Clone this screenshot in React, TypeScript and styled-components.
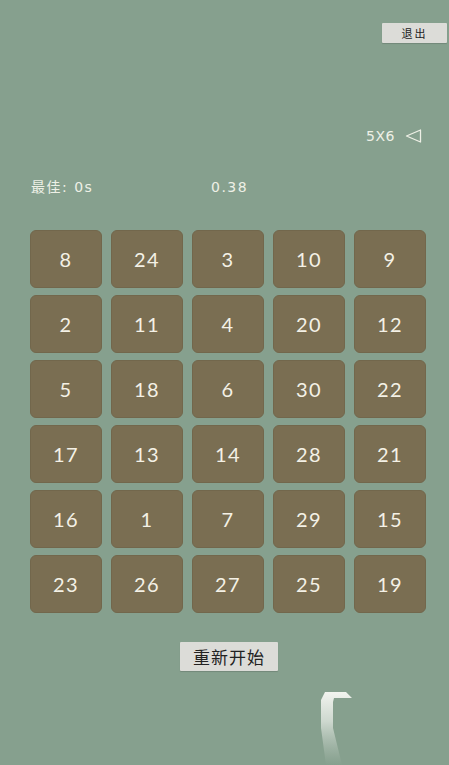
import React from "react";
import styled, { createGlobalStyle } from "styled-components";

const Global = createGlobalStyle`
  html, body { margin: 0; padding: 0; background: #86a08e; }
  #root { min-height: 765px; }
`;

const Page = styled.div`
  position: relative;
  width: 449px;
  height: 765px;
  overflow: hidden;
  background: #86a08e;
  padding-top: 23px;
  box-sizing: border-box;
  font-family: "DejaVu Sans", "Noto Sans CJK SC", sans-serif;
`;

const TopBar = styled.div`
  display: flex;
  justify-content: flex-end;
  padding-right: 2px;
`;

const ExitButton = styled.button`
  width: 65px;
  height: 20px;
  padding: 0;
  border: none;
  border-radius: 1px;
  background: #dcdcd8;
  color: #222;
  font-family: "Noto Sans CJK SC", sans-serif;
  font-size: 11px;
  line-height: 20px;
  letter-spacing: 2px;
  box-shadow: 0 1px 1px rgba(0, 0, 0, 0.15);
`;

const SizeRow = styled.div`
  margin-top: 84px;
  height: 18px;
  display: flex;
  justify-content: flex-end;
  align-items: center;
  gap: 10px;
  padding-right: 27px;
  color: #eef0e6;
  font-size: 14px;
  line-height: 18px;
  letter-spacing: 0.5px;
`;

const Triangle = styled.svg`
  width: 17px;
  height: 14px;
`;

const StatsRow = styled.div`
  margin-top: 33px;
  height: 18px;
  display: flex;
  align-items: center;
  padding-left: 31px;
  color: #eef0e6;
  font-size: 14px;
  line-height: 18px;
  letter-spacing: 1.5px;
`;

const Best = styled.span`
  width: 180px;
`;

const Grid = styled.div`
  margin-top: 34px;
  margin-left: 30px;
  display: grid;
  grid-template-columns: repeat(5, 72px);
  grid-auto-rows: 58px;
  column-gap: 9px;
  row-gap: 7px;
`;

const Tile = styled.div`
  display: flex;
  align-items: center;
  justify-content: center;
  background: #7a6e52;
  border: 1px solid #72674c;
  border-radius: 6px;
  box-sizing: border-box;
  color: #f4f1e6;
  font-family: "Lato", "Noto Sans", sans-serif;
  font-size: 20px;
  letter-spacing: 1.5px;
`;

const RestartRow = styled.div`
  margin-top: 29px;
  padding-left: 180px;
`;

const RestartButton = styled.button`
  width: 98px;
  height: 29px;
  padding: 0;
  border: none;
  border-radius: 1px;
  background: #dcdcd8;
  color: #222;
  font-family: "Noto Sans CJK SC", sans-serif;
  font-size: 17px;
  line-height: 29px;
  letter-spacing: 1px;
  box-shadow: 0 1px 1px rgba(0, 0, 0, 0.15);
`;

const Cursor = styled.svg`
  position: absolute;
  left: 318px;
  top: 688px;
  width: 36px;
  height: 77px;
`;

const numbers = [
  8, 24, 3, 10, 9,
  2, 11, 4, 20, 12,
  5, 18, 6, 30, 22,
  17, 13, 14, 28, 21,
  16, 1, 7, 29, 15,
  23, 26, 27, 25, 19,
];

export default function App() {
  return (
    <Page>
      <Global />
      <TopBar>
        <ExitButton>退出</ExitButton>
      </TopBar>
      <SizeRow>
        <span>5X6</span>
        <Triangle viewBox="0 0 17 14">
          <path d="M15.5 1 L1.5 7 L15.5 13 Z" fill="none" stroke="#eef0e6" strokeWidth="1.3" strokeLinejoin="round" />
        </Triangle>
      </SizeRow>
      <StatsRow>
        <Best>最佳: 0s</Best>
        <span>0.38</span>
      </StatsRow>
      <Grid>
        {numbers.map((n) => (
          <Tile key={n}>{n}</Tile>
        ))}
      </Grid>
      <RestartRow>
        <RestartButton>重新开始</RestartButton>
      </RestartRow>
      <Cursor viewBox="0 0 36 77">
        <defs>
          <linearGradient id="fade" x1="0" y1="0" x2="0" y2="1">
            <stop offset="0" stopColor="#f2f4ef" stopOpacity="1" />
            <stop offset="0.4" stopColor="#e6ebe5" stopOpacity="0.75" />
            <stop offset="1" stopColor="#c8d2c9" stopOpacity="0" />
          </linearGradient>
        </defs>
        <path d="M7 4 L28 4 L34 10 L16 10 L15 14 L15 40 L24 77 L8 77 L3 40 L3 12 Z" fill="url(#fade)" />
      </Cursor>
    </Page>
  );
}
